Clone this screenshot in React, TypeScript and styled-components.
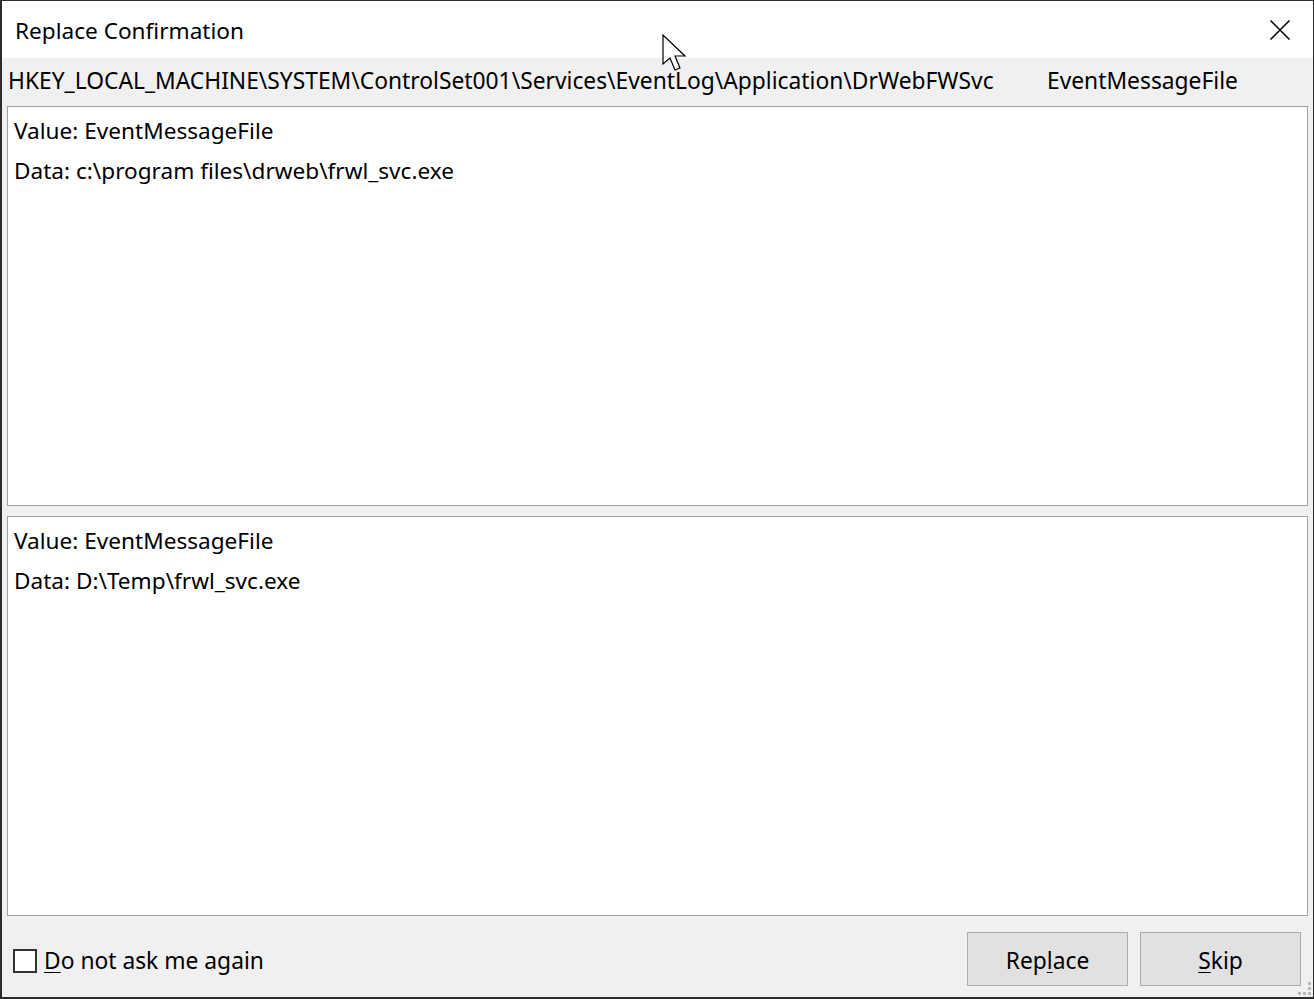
import React from "react";
import styled, { createGlobalStyle } from "styled-components";

const Global = createGlobalStyle`
  html, body { margin: 0; padding: 0; background: #2b2b2b; }
  body { font-family: "Noto Sans", "Open Sans", "DejaVu Sans", sans-serif; }
  * { box-sizing: border-box; }
`;

const Window = styled.div`
  position: relative;
  width: 1314px;
  height: 999px;
  border: 1px solid #2b2b2b;
  border-left-width: 2px;
  border-bottom-width: 2px;
  background: #f0f0f0;
  display: flex;
  flex-direction: column;
  overflow: hidden;
`;

const TitleBar = styled.div`
  height: 57px;
  background: #ffffff;
  display: flex;
  align-items: center;
  justify-content: space-between;
  padding: 0 18px 0 13px;
  flex-shrink: 0;
`;

const Title = styled.span`
  font-size: 22.6px;
  color: #000;
  padding-top: 2px;
`;

const CloseButton = styled.div`
  width: 30px;
  height: 30px;
  display: flex;
  align-items: center;
  justify-content: center;
`;

const PathRow = styled.div`
  height: 48px;
  display: flex;
  align-items: center;
  padding: 0 0 2px 6px;
  font-size: 22.8px;
  color: #000;
  white-space: nowrap;
`;

const PathText = styled.span`
  width: 1039px;
  flex-shrink: 0;
  overflow: hidden;
`;

const Body = styled.div`
  flex: 1;
  display: flex;
  flex-direction: column;
  gap: 10px;
  padding: 0 5px 0 5px;
`;

const Panel = styled.div`
  height: 400px;
  background: #ffffff;
  border: 1px solid #a0a0a0;
  padding: 7px 0 0 6px;
  display: flex;
  flex-direction: column;
`;

const Line = styled.div`
  height: 40px;
  line-height: 34px;
  font-size: 22.6px;
  color: #000;
`;

const Footer = styled.div`
  display: flex;
  align-items: center;
  justify-content: space-between;
  padding: 16px 12px 0 11px;
  height: 82px;
`;

const CheckLabel = styled.label`
  display: flex;
  align-items: center;
  gap: 7px;
  font-size: 22.8px;
  color: #000;
  margin-top: -7px;
`;

const CheckBox = styled.span`
  width: 24px;
  height: 24px;
  border: 2px solid #333333;
  background: #ffffff;
  display: inline-block;
  margin-top: 1px;
`;

const U = styled.span`
  text-decoration: underline;
  text-underline-offset: 3px;
  text-decoration-thickness: 1px;
`;

const Buttons = styled.div`
  display: flex;
  gap: 12px;
  margin-top: -10px;
`;

const Button = styled.div`
  width: 161px;
  height: 54px;
  background: #e1e1e1;
  border: 1px solid #adadad;
  display: flex;
  align-items: center;
  justify-content: center;
  font-size: 22.8px;
  color: #000;
  padding-top: 2px;
`;

const Grip = styled.svg`
  position: absolute;
  right: 1px;
  bottom: 1px;
`;

const Cursor = styled.svg`
  position: absolute;
  left: 660px;
  top: 33px;
`;

export default function App() {
  return (
    <>
      <Global />
      <Window>
        <TitleBar>
          <Title>Replace Confirmation</Title>
          <CloseButton>
            <svg width="20" height="20" viewBox="0 0 20 20">
              <path d="M0.5 0.5 L19.5 19.5 M19.5 0.5 L0.5 19.5" stroke="#000" strokeWidth="1.5" />
            </svg>
          </CloseButton>
        </TitleBar>
        <PathRow>
          <PathText>HKEY_LOCAL_MACHINE\SYSTEM\ControlSet001\Services\EventLog\Application\DrWebFWSvc</PathText>
          <span>EventMessageFile</span>
        </PathRow>
        <Body>
          <Panel>
            <Line>Value: EventMessageFile</Line>
            <Line>Data: c:\program files\drweb\frwl_svc.exe</Line>
          </Panel>
          <Panel>
            <Line>Value: EventMessageFile</Line>
            <Line>Data: D:\Temp\frwl_svc.exe</Line>
          </Panel>
        </Body>
        <Footer>
          <CheckLabel>
            <CheckBox />
            <span><U>D</U>o not ask me again</span>
          </CheckLabel>
          <Buttons>
            <Button>Rep<U>l</U>ace</Button>
            <Button><U>S</U>kip</Button>
          </Buttons>
        </Footer>
        <Grip width="14" height="14" viewBox="0 0 14 14">
          <rect x="10" y="0" width="3" height="3" fill="#b9b9b9" />
          <rect x="10" y="5" width="3" height="3" fill="#b9b9b9" />
          <rect x="10" y="10" width="3" height="3" fill="#b9b9b9" />
          <rect x="5" y="10" width="3" height="3" fill="#b9b9b9" />
          <rect x="0" y="10" width="3" height="3" fill="#b9b9b9" />
        </Grip>
        <Cursor width="26" height="40" viewBox="0 0 26 40">
          <path d="M1 1 L1 30 L8 24 L13 36 L18 34 L13 22 L23 22 Z" fill="#fff" stroke="#000" strokeWidth="1.2" strokeLinejoin="miter" />
        </Cursor>
      </Window>
    </>
  );
}
